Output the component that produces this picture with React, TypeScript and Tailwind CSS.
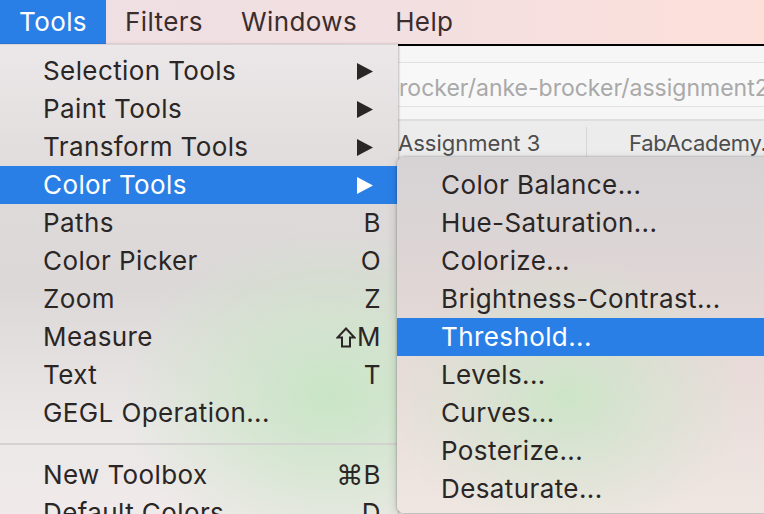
import React from 'react';

type Item = { label: string; key?: React.ReactNode; sub?: boolean; active?: boolean };

function ShiftGlyph() {
  return (
    <svg width="20" height="21" viewBox="0 0 20 21" className="mr-[1px] shrink-0">
      <polygon
        points="10,1.5 18.5,10.5 14,10.5 14,19.5 6,19.5 6,10.5 1.5,10.5"
        fill="none"
        stroke="#2b2626"
        strokeWidth="2"
        strokeLinejoin="miter"
      />
    </svg>
  );
}

const mainItems: Item[] = [
  { label: 'Selection Tools', sub: true },
  { label: 'Paint Tools', sub: true },
  { label: 'Transform Tools', sub: true },
  { label: 'Color Tools', sub: true, active: true },
  { label: 'Paths', key: 'B' },
  { label: 'Color Picker', key: 'O' },
  { label: 'Zoom', key: 'Z' },
  {
    label: 'Measure',
    key: (
      <span className="flex items-center">
        <ShiftGlyph />M
      </span>
    ),
  },
  { label: 'Text', key: 'T' },
  { label: 'GEGL Operation...' },
];

const lowerItems: Item[] = [
  {
    label: 'New Toolbox',
    key: (
      <span className="flex items-center">
        <span className="font-['DejaVu_Sans',sans-serif] text-[27px]">⌘</span>B
      </span>
    ),
  },
  { label: 'Default Colors', key: 'D' },
];

const colorItems = [
  'Color Balance...',
  'Hue-Saturation...',
  'Colorize...',
  'Brightness-Contrast...',
  'Threshold...',
  'Levels...',
  'Curves...',
  'Posterize...',
  'Desaturate...',
];

function Arrow({ white }: { white?: boolean }) {
  return (
    <svg width="16" height="17" viewBox="0 0 16 17" className="mr-[8px] shrink-0">
      <polygon points="0,0 16,8.5 0,17" fill={white ? '#ffffff' : '#2b2626'} />
    </svg>
  );
}

function MenuRow({ item }: { item: Item }) {
  return (
    <div
      className={`flex h-[38px] items-center pl-[43px] pr-[17px] ${
        item.active ? 'bg-[#2a7fe7] text-white' : 'text-[#2b2626]'
      }`}
    >
      <span className="flex-1 whitespace-nowrap">{item.label}</span>
      {item.sub && <Arrow white={item.active} />}
      {item.key && <span className="whitespace-nowrap">{item.key}</span>}
    </div>
  );
}

export default function App() {
  return (
    <div className="relative h-[514px] w-[764px] overflow-hidden bg-[#f6f6f6] font-['Inter','Noto_Sans',sans-serif] text-[26px] leading-none tracking-[0.4px]">
      {/* menu bar */}
      <div className="flex h-[44px] items-center bg-[linear-gradient(90deg,#eedfe3_0%,#f2dfe1_50%,#fde0da_100%)] text-[#3a2d2e]">
        <div className="flex h-full items-center bg-[#2a7fe7] px-[19px] text-white">Tools</div>
        <div className="pl-[19px]">Filters</div>
        <div className="pl-[38px]">Windows</div>
        <div className="pl-[38px]">Help</div>
      </div>

      {/* browser window behind menus */}
      <div className="border-t-2 border-black bg-[#f6f6f6] pl-[398px]">
        <div className="mt-[16px] flex h-[45px] items-center overflow-hidden border-y border-[#e2e2e2] bg-[#f8f8f8] pt-[8px] text-[23px] tracking-normal text-[#a9a9a9]">
          <span className="ml-[-13px] whitespace-nowrap">brocker/anke-brocker/assignment2</span>
        </div>
        <div className="mt-[12px] flex h-[40px] items-center overflow-hidden border-t-2 border-[#dedede] bg-[#ececec] pt-[6px] text-[22px] tracking-normal text-[#4d4d4d]">
          <div className="flex h-full w-[189px] shrink-0 items-center border-r border-[#d6d6d6]">Assignment 3</div>
          <div className="shrink-0 whitespace-nowrap pl-[42px] tracking-[-0.3px]">FabAcademy.</div>
        </div>
      </div>

      {/* Tools dropdown */}
      <div className="absolute left-0 top-[44px] w-[398px] border-t border-[#d9d4d5] bg-[radial-gradient(ellipse_210px_170px_at_330px_350px,#c9e5c6_0%,rgba(205,229,201,0.65)_45%,transparent_100%),linear-gradient(180deg,#ece7e8_0%,#dedada_30%,#dcd8d8_50%,#ece8e8_80%,#f1eaea_100%)] pt-[7px] shadow-[1px_0_2px_rgba(0,0,0,0.25)]">
        {mainItems.map((it) => (
          <MenuRow key={it.label} item={it} />
        ))}
        <div className="flex h-[24px] items-center">
          <div className="h-[2px] w-full bg-[#d4d2d0]" />
        </div>
        {lowerItems.map((it) => (
          <MenuRow key={it.label} item={it} />
        ))}
      </div>

      {/* Color Tools submenu */}
      <div className="absolute left-[397px] top-[157px] w-[400px] rounded-[7px] bg-[radial-gradient(ellipse_180px_140px_at_170px_240px,#cde5c8_0%,rgba(207,229,204,0.55)_45%,transparent_100%),linear-gradient(180deg,#d6d3d5_0%,#dfd6d5_35%,#e8dbd9_60%,#efe6e2_100%)] pb-[5px] pt-[9px] text-[#2b2626] shadow-[0_0_3px_rgba(0,0,0,0.35),0_4px_12px_rgba(0,0,0,0.15)]">
        {colorItems.map((label) => (
          <div
            key={label}
            className={`flex h-[38px] items-center pl-[44px] ${
              label === 'Threshold...' ? 'bg-[#2a7fe7] text-white' : ''
            }`}
          >
            <span className="whitespace-nowrap">{label}</span>
          </div>
        ))}
      </div>
    </div>
  );
}
